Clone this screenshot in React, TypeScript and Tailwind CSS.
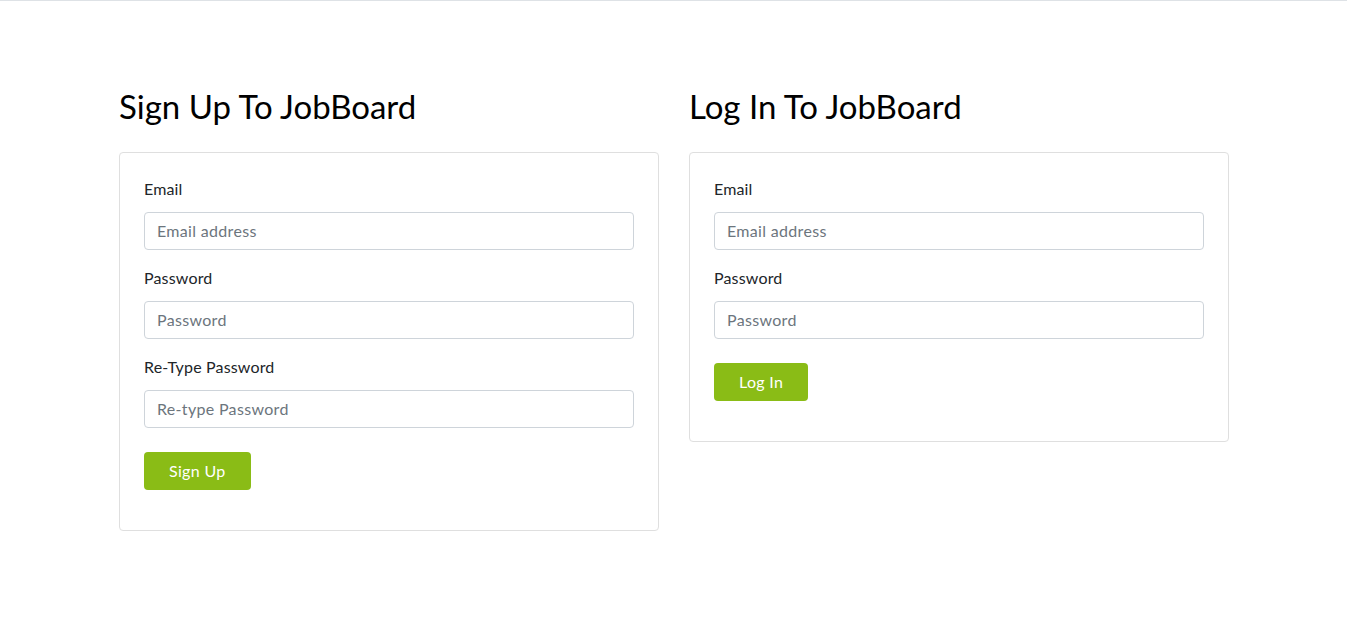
import React from "react";

const font = { fontFamily: "Lato, 'Noto Sans', sans-serif" };

function Field({ label, placeholder, type = "text" }: { label: string; placeholder: string; type?: string }) {
  return (
    <div className="mb-4">
      <label className="block text-base leading-6 mb-[11px] text-[#212529] tracking-[0.01em]">{label}</label>
      <input
        type={type}
        placeholder={placeholder}
        className="block w-full h-[38px] px-3 pb-[2px] text-base text-[#495057] tracking-[0.02em] border border-[#ced4da] rounded placeholder:text-[#6c757d] outline-none"
      />
    </div>
  );
}

function Panel({ title, children }: { title: string; children: React.ReactNode }) {
  return (
    <div className="w-[540px]">
      <h2 className="text-[33px] leading-[38px] text-black font-normal mb-[27px]">{title}</h2>
      <div className="border border-[#dfdfdf] rounded px-6 pt-6 pb-10">{children}</div>
    </div>
  );
}

function SubmitButton({ text }: { text: string }) {
  return (
    <button className="mt-2 h-[38px] px-[25px] rounded bg-[#8abc16] text-white text-base tracking-[0.02em]">{text}</button>
  );
}

export default function App() {
  return (
    <div className="min-h-screen bg-white border-t border-[#dee2e6]" style={font}>
      <div className="flex justify-center gap-[30px] pt-[86px] pl-px">
        <Panel title="Sign Up To JobBoard">
          <Field label="Email" placeholder="Email address" type="email" />
          <Field label="Password" placeholder="Password" type="password" />
          <Field label="Re-Type Password" placeholder="Re-type Password" type="password" />
          <SubmitButton text="Sign Up" />
        </Panel>
        <Panel title="Log In To JobBoard">
          <Field label="Email" placeholder="Email address" type="email" />
          <Field label="Password" placeholder="Password" type="password" />
          <SubmitButton text="Log In" />
        </Panel>
      </div>
    </div>
  );
}
